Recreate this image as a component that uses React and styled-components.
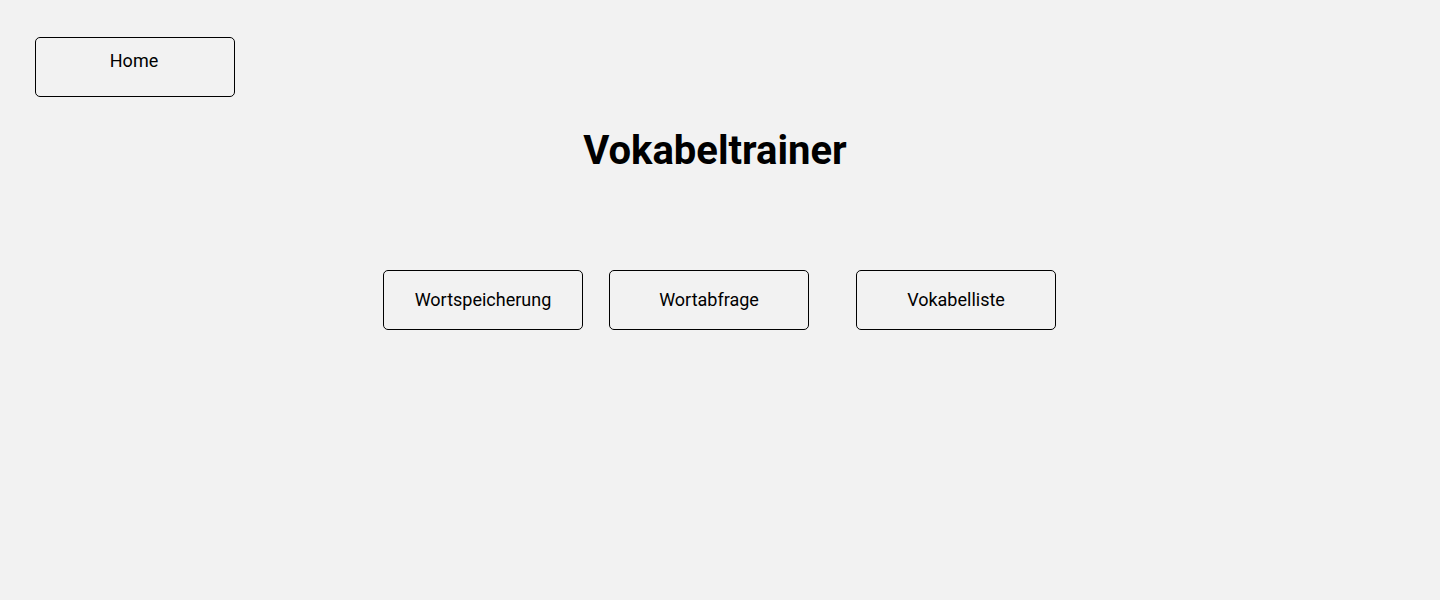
import React from "react";
import styled, { createGlobalStyle } from "styled-components";

const GlobalStyle = createGlobalStyle`
  * { box-sizing: border-box; }
  body {
    margin: 0;
    background: #f2f2f2;
    color: #000;
    font-family: Roboto, sans-serif;
  }
`;

const Page = styled.div`
  min-height: 100vh;
  padding: 37px 35px;
`;

const NavButton = styled.button`
  display: flex;
  justify-content: center;
  align-items: ${(p) => (p.$top ? "flex-start" : "center")};
  width: 200px;
  height: 60px;
  padding: ${(p) => (p.$top ? "12px 2px 0 0" : "0")};
  border: 1px solid #000;
  border-radius: 5px;
  background: transparent;
  color: inherit;
  font: 400 18px/22px Roboto, sans-serif;
  cursor: pointer;
`;

const Title = styled.h1`
  margin: 30px 10px 0 0;
  font-size: 40px;
  line-height: 48px;
  font-weight: 700;
  text-align: center;
`;

const Menu = styled.nav`
  display: grid;
  grid-template-columns: 226px 247px 201px;
  justify-content: center;
  margin-top: 95px;
`;

export default function App() {
  return (
    <>
      <GlobalStyle />
      <Page>
        <header>
          <NavButton type="button" $top>Home</NavButton>
        </header>
        <main>
          <Title>Vokabeltrainer</Title>
          <Menu>
            <NavButton type="button">Wortspeicherung</NavButton>
            <NavButton type="button">Wortabfrage</NavButton>
            <NavButton type="button">Vokabelliste</NavButton>
          </Menu>
        </main>
      </Page>
    </>
  );
}
